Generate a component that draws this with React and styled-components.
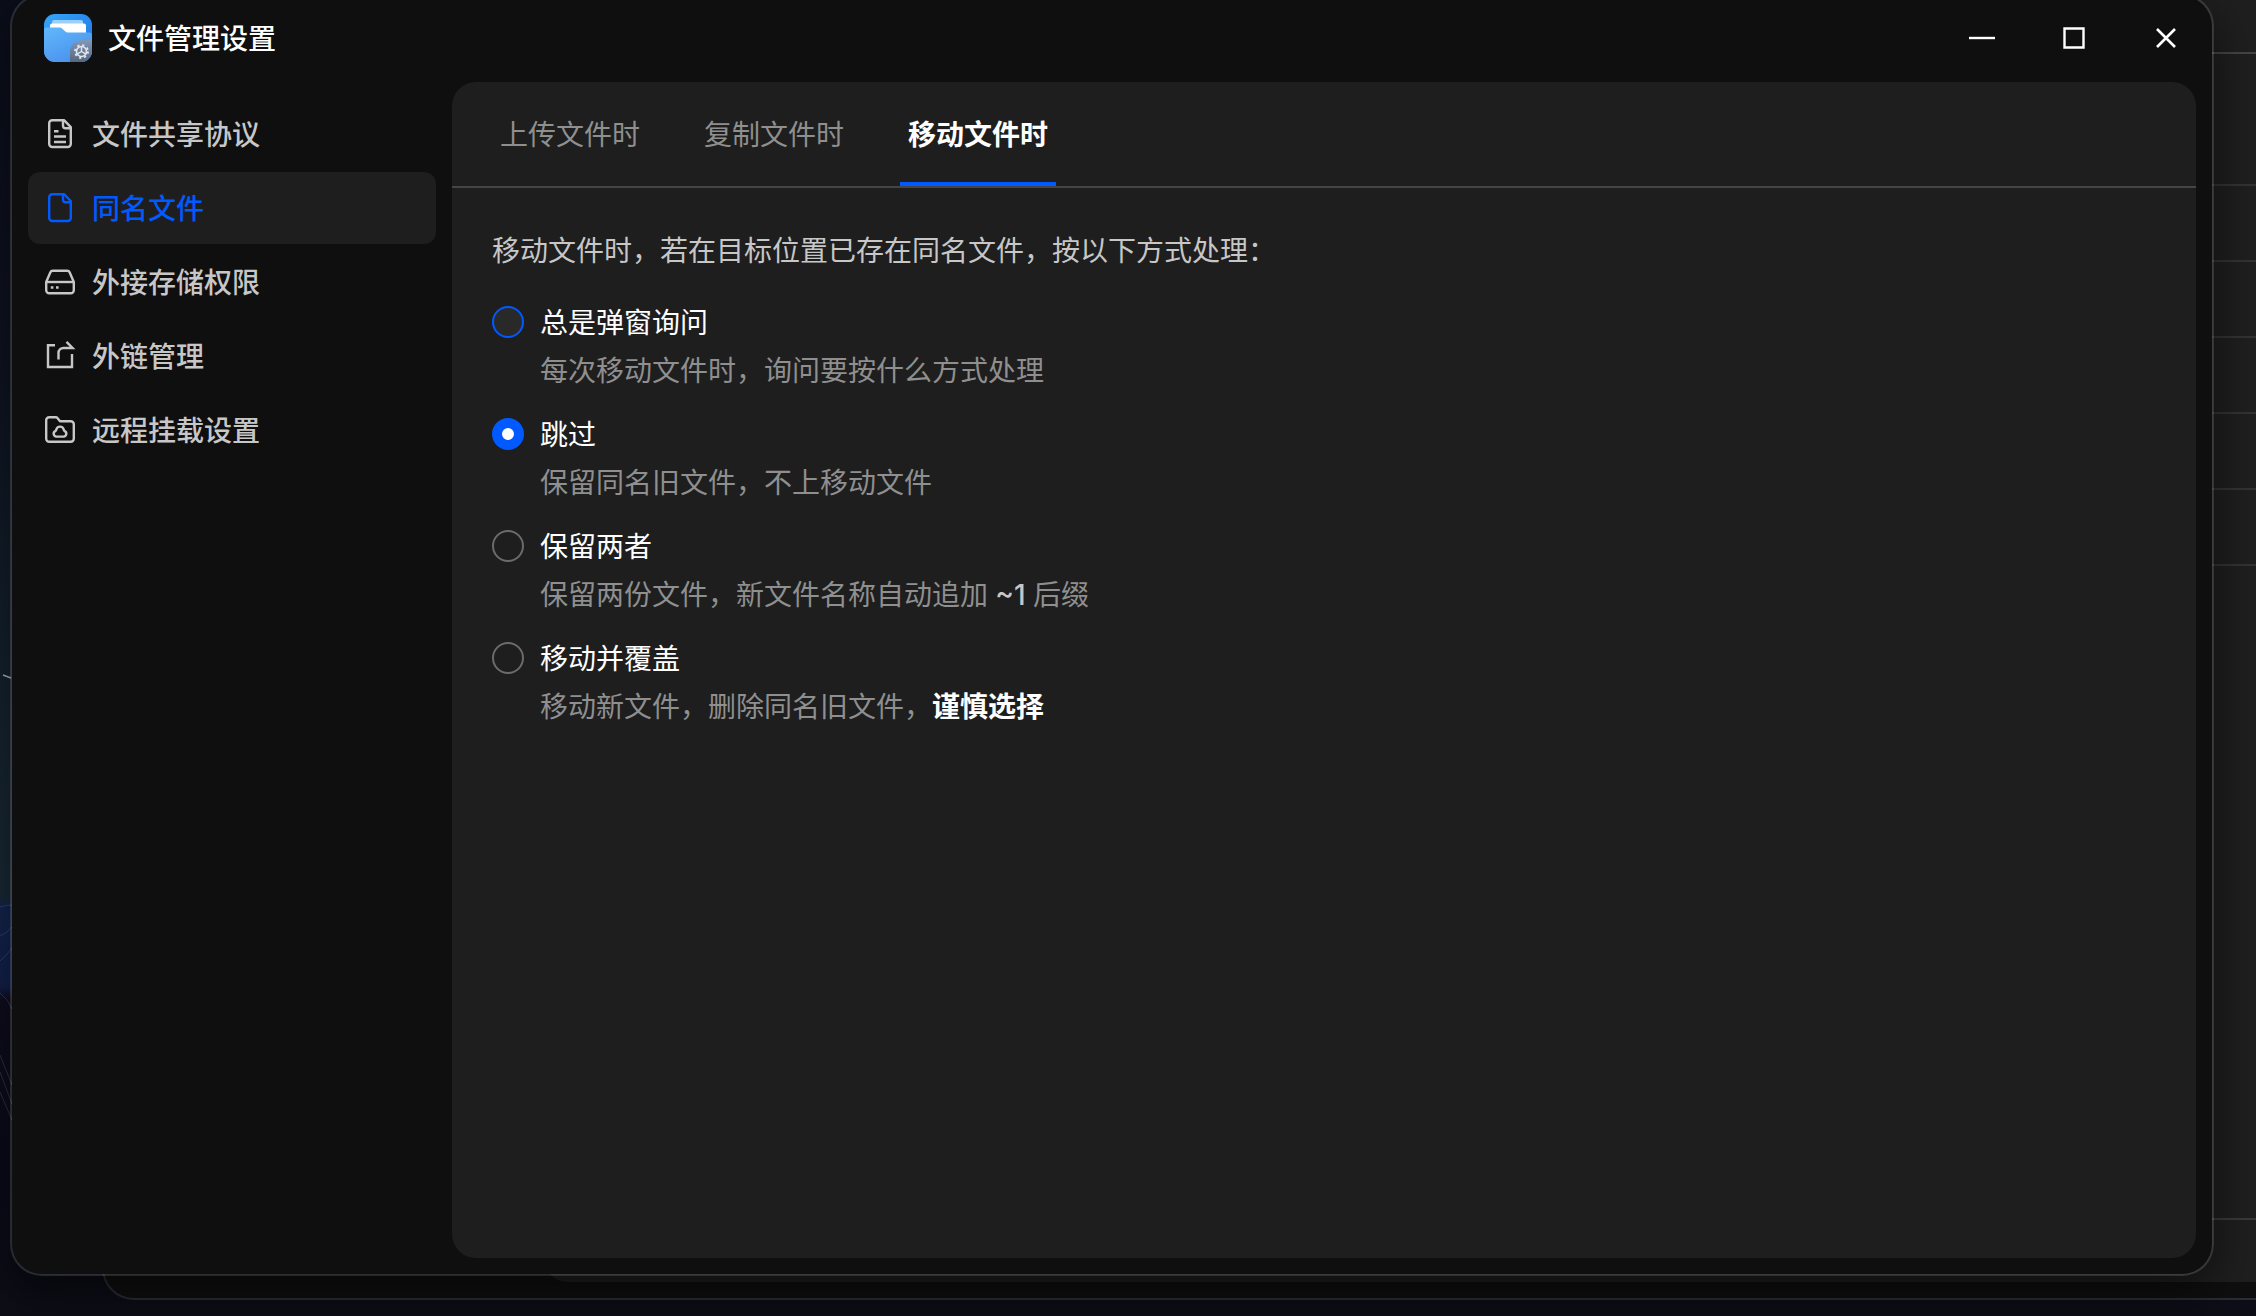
import React, { useState } from 'react';
import styled, { createGlobalStyle, css } from 'styled-components';

const GlobalStyle = createGlobalStyle`
    * {
        box-sizing: border-box;
    }
    body {
        margin: 0;
        background: #0c101c;
        color: #fff;
        font-family: 'Noto Sans', 'Noto Sans CJK SC', sans-serif;
        font-size: 28px;
        line-height: 40px;
    }
    button {
        border: 0;
        padding: 0;
        background: none;
        color: inherit;
        font: inherit;
        cursor: pointer;
    }
`;

const Desktop = styled.div`
    position: relative;
    height: 100vh;
    overflow: hidden;
    background: linear-gradient(
        180deg,
        #0b0e1a 0%,
        #0f1422 28%,
        #14202d 46%,
        #1a2a36 68%,
        #14264f 69%,
        #13204c 75%,
        #0f0d1e 76%,
        #0a0b1a 90%,
        #0d0e16 100%
    );
`;

const Wallpaper = styled.svg`
    position: absolute;
    top: 0;
    left: 0;
`;

/* windows */

const windowFrame = css`
    position: absolute;
    display: flex;
    flex-direction: column;
    border: 2px solid rgba(255, 255, 255, 0.13);
    border-radius: 32px;
    background: #0f0f0f;
    background-clip: padding-box;
`;

const BackWindow = styled.div`
    ${windowFrame}
    top: -60px;
    right: -120px;
    bottom: 16px;
    left: 102px;
    padding: 0 16px 16px 440px;
`;

const BackPanel = styled.div`
    flex: 1;
    display: flex;
    flex-direction: column;
    border-radius: 24px;
    background: #1f1f1f;
`;

const BackHeader = styled.div`
    height: 112px;
    border-bottom: 2px solid #454545;
`;

const BackToolbar = styled.div`
    height: 56px;
`;

const BackRow = styled.div`
    height: 76px;
    border-bottom: 2px solid #333;
`;

const BackFooter = styled.div`
    height: 64px;
    margin-top: auto;
    border-top: 2px solid #3a3a3a;
`;

const SettingsWindow = styled.div`
    ${windowFrame}
    top: -6px;
    right: 42px;
    bottom: 40px;
    left: 10px;
    padding: 4px 16px 16px;
    box-shadow: 0 16px 48px rgba(0, 0, 0, 0.55);
`;

const TitleBar = styled.header`
    display: flex;
    align-items: center;
    height: 76px;
    padding: 0 6px 0 16px;
    gap: 16px;
`;

const Title = styled.h1`
    flex: 1;
    margin: 0;
    font-size: 28px;
    font-weight: 500;
`;

const WindowButtons = styled.div`
    display: flex;
    gap: 44px;
`;

const WindowButton = styled.button`
    display: flex;
    align-items: center;
    justify-content: center;
    width: 48px;
    height: 48px;
`;

const Body = styled.div`
    flex: 1;
    display: flex;
    gap: 16px;
    min-height: 0;
    padding-top: 6px;
`;

/* sidebar */

const Sidebar = styled.nav`
    flex: none;
    display: flex;
    flex-direction: column;
    gap: 2px;
    width: 408px;
    padding-top: 16px;
`;

const SidebarItem = styled.button`
    display: flex;
    align-items: center;
    gap: 16px;
    height: 72px;
    padding: 0 16px;
    border-radius: 12px;
    background: ${(props) => (props.$active ? '#1e1e1e' : 'transparent')};
    color: ${(props) => (props.$active ? '#005aff' : '#c7c7c7')};
    font-weight: 500;
    text-align: left;
`;

/* content */

const Panel = styled.main`
    flex: 1;
    min-width: 0;
    border-radius: 24px;
    background: #1e1e1e;
`;

const Tabs = styled.div`
    display: flex;
    gap: 48px;
    height: 106px;
    padding: 0 40px;
    border-bottom: 2px solid #454545;
`;

const Tab = styled.button`
    padding: 0 8px;
    border-top: 4px solid transparent;
    border-bottom: 4px solid ${(props) => (props.$active ? '#005aff' : 'transparent')};
    color: ${(props) => (props.$active ? '#fff' : '#8f8f8f')};
    font-weight: ${(props) => (props.$active ? 700 : 400)};
`;

const Options = styled.fieldset`
    display: flex;
    flex-direction: column;
    gap: 24px;
    margin: 0;
    padding: 42px 40px;
    border: 0;
`;

const Intro = styled.legend`
    float: left;
    margin-bottom: 8px;
    padding: 0;
    color: #c7c7c7;
`;

const Option = styled.label`
    display: flex;
    align-items: flex-start;
    gap: 16px;
    cursor: pointer;
`;

const Radio = styled.input`
    appearance: none;
    flex: none;
    width: 32px;
    height: 32px;
    margin: 4px 0;
    border: 2px solid ${(props) => (props.$highlight ? '#005aff' : '#6b6b6b')};
    border-radius: 50%;
    background: ${(props) => (props.$highlight ? '#292929' : 'transparent')};

    &:checked {
        border: 10px solid #005aff;
        background: #fff;
    }
`;

const OptionText = styled.span`
    display: flex;
    flex-direction: column;
    gap: 8px;
`;

const Description = styled.span`
    height: 40px;
    color: #8f8f8f;
`;

const Suffix = styled.span`
    color: #c7c7c7;
    font-family: Inter, sans-serif;
    font-weight: 500;
    line-height: 1;
`;

const Warning = styled.strong`
    color: #fff;
    font-weight: 700;
`;

/* icons */

const Icon = ({ children }) => (
    <svg
        width="32"
        height="32"
        viewBox="0 0 32 32"
        fill="none"
        stroke="currentColor"
        strokeWidth="2.4"
        strokeLinejoin="round"
        aria-hidden="true"
    >
        {children}
    </svg>
);

const PageOutline = () => (
    <>
        <path d="M8 2.2h12l6.8 7V26a3 3 0 0 1-3 3H8.2a3 3 0 0 1-3-3V5.2a3 3 0 0 1 3-3z" />
        <path d="M19 2.2v5.5a2.5 2.5 0 0 0 2.5 2.5h5.3" />
    </>
);

const ProtocolIcon = () => (
    <Icon>
        <PageOutline />
        <path d="M10 13.2h4.500M10 18.5h12M10 24h12" />
    </Icon>
);

const FileIcon = () => (
    <Icon>
        <PageOutline />
    </Icon>
);

const DriveIcon = () => (
    <Icon>
        <path d="M2.2 16L6.4 6.2a2.5 2.5 0 0 1 2.3-1.5h14.6a2.5 2.5 0 0 1 2.3 1.5L29.8 16v8.3a3 3 0 0 1-3 3H5.2a3 3 0 0 1-3-3z" />
        <path d="M2.2 16h27.6" />
        <path d="M6.8 21.5h2.6M12 21.5h2.6" />
    </Icon>
);

const ShareIcon = () => (
    <Icon>
        <path d="M11 5.2H4V27h24V14" strokeLinejoin="miter" />
        <path d="M14.5 19.5V13a5 5 0 0 1 5-5h9.100L22.5 1.8" strokeLinejoin="miter" />
    </Icon>
);

const RemoteIcon = () => (
    <Icon>
        <path d="M5 3.2h6.8a2 2 0 0 1 1.6.8l2.600 3.200h10.800a3 3 0 0 1 3 3v14.600a3 3 0 0 1-3 3H5.200a3 3 0 0 1-3-3V6.200a3 3 0 0 1 3-3z" />
        <path d="M12.4 22.6a2.9 2.9 0 0 1-1.100-5.500c.6-.3 1-.8 1-1.500a3.800 3.800 0 0 1 7.400 0c0 .7.4 1.200 1 1.500a2.900 2.900 0 0 1-1.100 5.500z" />
    </Icon>
);

const AppIcon = () => (
    <svg width="48" height="48" viewBox="0 0 48 48" aria-hidden="true">
        <defs>
            <linearGradient id="app-back" x1="0" y1="0" x2="1" y2="1">
                <stop offset="0" stopColor="#35a6fb" />
                <stop offset="1" stopColor="#1f6fe0" />
            </linearGradient>
            <linearGradient id="app-front" x1="0" y1="0" x2="0.6" y2="1">
                <stop offset="0" stopColor="#60b8fb" />
                <stop offset="1" stopColor="#4b92ee" />
            </linearGradient>
            <linearGradient id="app-badge" x1="0" y1="0" x2="0" y2="1">
                <stop offset="0" stopColor="#8298b8" />
                <stop offset="1" stopColor="#55677f" />
            </linearGradient>
            <clipPath id="app-shape">
                <rect width="48" height="48" rx="11" />
            </clipPath>
        </defs>
        <g clipPath="url(#app-shape)">
            <rect width="48" height="48" fill="url(#app-back)" />
            <path d="M10 6h27a2 2 0 0 1 2 2v4H8V8a2 2 0 0 1 2-2z" fill="#9ccffa" />
            <path d="M8 9.5h32a2 2 0 0 1 2 2V22H6V11.5a2 2 0 0 1 2-2z" fill="#fff" />
            <path
                d="M0 16.5a3 3 0 0 1 3-3h12.500a4 4 0 0 1 2.600 1l3.200 3a4 4 0 0 0 2.600 1H45a3 3 0 0 1 3 3V48H0z"
                fill="url(#app-front)"
            />
            <path d="M26 48V38a12 12 0 0 1 12-12h10v22z" fill="url(#app-badge)" />
            <g stroke="#e4e8ee" fill="none">
                <circle cx="37.5" cy="37.5" r="6.5" strokeWidth="1.8" strokeDasharray="2.2 2.905" />
                <circle cx="37.5" cy="37.5" r="5" strokeWidth="1.6" />
                <path d="M37.5 37.5V33M37.5 37.5l-4 2.300M37.5 37.5l4 2.300" strokeWidth="1.4" />
            </g>
        </g>
    </svg>
);

const MENU = [
    { name: '文件共享协议', icon: ProtocolIcon },
    { name: '同名文件', icon: FileIcon },
    { name: '外接存储权限', icon: DriveIcon },
    { name: '外链管理', icon: ShareIcon },
    { name: '远程挂载设置', icon: RemoteIcon },
];

const TABS = ['上传文件时', '复制文件时', '移动文件时'];

const OPTIONS = [
    {
        value: 'ask',
        name: '总是弹窗询问',
        description: '每次移动文件时，询问要按什么方式处理',
        highlight: true,
    },
    { value: 'skip', name: '跳过', description: '保留同名旧文件，不上移动文件' },
    {
        value: 'both',
        name: '保留两者',
        description: (
            <>
                保留两份文件，新文件名称自动追加 <Suffix>~1</Suffix> 后缀
            </>
        ),
    },
    {
        value: 'overwrite',
        name: '移动并覆盖',
        description: (
            <>
                移动新文件，删除同名旧文件，<Warning>谨慎选择</Warning>
            </>
        ),
    },
];

const App = () => {
    const [menu, setMenu] = useState('同名文件');
    const [tab, setTab] = useState('移动文件时');
    const [mode, setMode] = useState('skip');

    return (
        <Desktop>
            <GlobalStyle />
            <Wallpaper width="100" height="1316" fill="none" aria-hidden="true">
                <path d="M3 675l8 3" stroke="#a9b4bd" strokeWidth="1.6" />
                <g stroke="#3f6298" strokeOpacity="0.5">
                    <path d="M0 907q6-2 12-2" />
                    <path d="M0 936q7-3 12-9" />
                    <path d="M0 961q7-6 12-13" />
                </g>
                <g stroke="#5d5878" strokeOpacity="0.45">
                    <path d="M0 993q8 6 12 16" />
                    <path d="M0 1055l12 30" />
                    <path d="M0 1072l12 32" />
                    <path d="M0 1092l12 28" />
                </g>
            </Wallpaper>

            <BackWindow aria-hidden="true">
                <BackPanel>
                    <BackHeader />
                    <BackToolbar />
                    {[0, 1, 2, 3, 4, 5].map((row) => (
                        <BackRow key={row} />
                    ))}
                    <BackFooter />
                </BackPanel>
            </BackWindow>

            <SettingsWindow>
                <TitleBar>
                    <AppIcon />
                    <Title>文件管理设置</Title>
                    <WindowButtons>
                        <WindowButton aria-label="最小化">
                            <svg width="28" height="28" stroke="#fff" strokeWidth="2.4">
                                <path d="M1 14h26" />
                            </svg>
                        </WindowButton>
                        <WindowButton aria-label="最大化">
                            <svg width="28" height="28" fill="none" stroke="#fff" strokeWidth="2.4">
                                <path d="M4.5 4.5h19v19h-19z" />
                            </svg>
                        </WindowButton>
                        <WindowButton aria-label="关闭">
                            <svg width="28" height="28" stroke="#fff" strokeWidth="2.6">
                                <path d="M5 5l18 18M23 5L5 23" />
                            </svg>
                        </WindowButton>
                    </WindowButtons>
                </TitleBar>

                <Body>
                    <Sidebar>
                        {MENU.map(({ name, icon: ItemIcon }) => (
                            <SidebarItem key={name} $active={name === menu} onClick={() => setMenu(name)}>
                                <ItemIcon />
                                {name}
                            </SidebarItem>
                        ))}
                    </Sidebar>

                    <Panel>
                        <Tabs role="tablist">
                            {TABS.map((name) => (
                                <Tab
                                    key={name}
                                    role="tab"
                                    aria-selected={name === tab}
                                    $active={name === tab}
                                    onClick={() => setTab(name)}
                                >
                                    {name}
                                </Tab>
                            ))}
                        </Tabs>
                        <Options>
                            <Intro>移动文件时，若在目标位置已存在同名文件，按以下方式处理：</Intro>
                            {OPTIONS.map((option) => (
                                <Option key={option.value}>
                                    <Radio
                                        type="radio"
                                        name="mode"
                                        value={option.value}
                                        checked={mode === option.value}
                                        onChange={() => setMode(option.value)}
                                        $highlight={option.highlight}
                                    />
                                    <OptionText>
                                        <span>{option.name}</span>
                                        <Description>{option.description}</Description>
                                    </OptionText>
                                </Option>
                            ))}
                        </Options>
                    </Panel>
                </Body>
            </SettingsWindow>
        </Desktop>
    );
};

export default App;
